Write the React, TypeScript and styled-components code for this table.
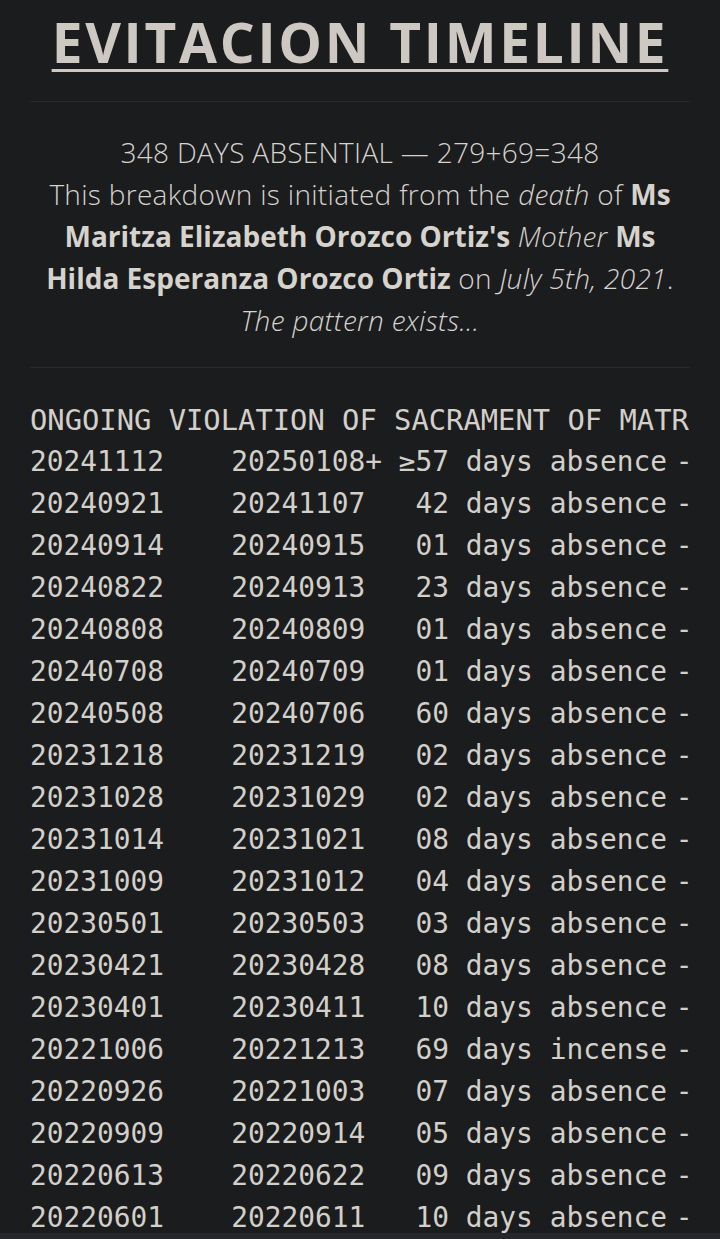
import React from 'react'
import styled, { createGlobalStyle } from 'styled-components'

type Entry = {
  start: string
  end: string
  days: string
  kind?: string
}

const entries: Entry[] = [
  { start: '20241112', end: '20250108+', days: '≥57' },
  { start: '20240921', end: '20241107', days: '42' },
  { start: '20240914', end: '20240915', days: '01' },
  { start: '20240822', end: '20240913', days: '23' },
  { start: '20240808', end: '20240809', days: '01' },
  { start: '20240708', end: '20240709', days: '01' },
  { start: '20240508', end: '20240706', days: '60' },
  { start: '20231218', end: '20231219', days: '02' },
  { start: '20231028', end: '20231029', days: '02' },
  { start: '20231014', end: '20231021', days: '08' },
  { start: '20231009', end: '20231012', days: '04' },
  { start: '20230501', end: '20230503', days: '03' },
  { start: '20230421', end: '20230428', days: '08' },
  { start: '20230401', end: '20230411', days: '10' },
  { start: '20221006', end: '20221213', days: '69', kind: 'incense' },
  { start: '20220926', end: '20221003', days: '07' },
  { start: '20220909', end: '20220914', days: '05' },
  { start: '20220613', end: '20220622', days: '09' },
  { start: '20220601', end: '20220611', days: '10' },
]

const GlobalStyle = createGlobalStyle`
  body {
    margin: 0;
    background: #1b1c1e;
    color: #d6d2cc;
    font-family: "Open Sans", "Noto Sans", sans-serif;
  }
`

const App: React.FC = () => {
  return (
    <>
      <GlobalStyle />
      <Page>
        <Title>EVITACION TIMELINE</Title>
        <Rule />
        <Intro>
          348 DAYS ABSENTIAL — 279+69=348
          <br />
          This breakdown is initiated from the <em>death</em> of <strong>Ms</strong>
          <br />
          <strong>Maritza Elizabeth Orozco Ortiz's</strong> <em>Mother</em> <strong>Ms</strong>
          <br />
          <strong>Hilda Esperanza Orozco Ortiz</strong> on <em>July 5th, 2021</em>.
          <br />
          <em>The pattern exists...</em>
        </Intro>
        <Rule />
        <Timeline>
          <Heading>ONGOING VIOLATION OF SACRAMENT OF MATRIMONY</Heading>
          {entries.map((e) => (
            <Row key={e.start}>
              <Cell>{e.start}</Cell>
              <Cell>{e.end}</Cell>
              <Count>{e.days}</Count>
              <Cell> days {e.kind ?? 'absence'} </Cell>
              <Dash>-</Dash>
            </Row>
          ))}
        </Timeline>
      </Page>
      <BottomBar />
    </>
  )
}

const Page = styled.main`
  padding: 9px 30px 0;
`

const Title = styled.h1`
  margin: 0;
  text-align: center;
  font-family: "Open Sans", sans-serif;
  font-weight: 700;
  font-size: 55px;
  line-height: 66px;
  letter-spacing: 2.7px;
  color: #cdc8c1;
  text-decoration: underline;
  text-decoration-thickness: 3px;
  text-underline-offset: 6px;
`

const Rule = styled.hr`
  margin: 26px 0 29px;
  border: 0;
  border-top: 1px solid #27292b;
`

const Intro = styled.p`
  margin: 0;
  text-align: center;
  font-size: 28px;
  font-weight: 300;
  letter-spacing: 0.3px;
  line-height: 42px;
  color: #d6d2cc;

  strong {
    font-weight: 700;
    letter-spacing: 0;
  }
`

const Timeline = styled.div`
  padding-top: 2px;
  overflow: hidden;
  font-family: "DejaVu Sans Mono", "Liberation Mono", monospace;
  color: #d3cfc9;
  white-space: pre;
`

const Heading = styled.div`
  font-size: 28.8px;
  line-height: 42px;
`

const Row = styled.div`
  display: grid;
  grid-template-columns: 12ch 9ch 4ch max-content max-content;
  font-size: 27.85px;
  line-height: 42px;
`

const Cell = styled.span``

const Count = styled.span`
  text-align: right;
`

const Dash = styled.span`
  margin-left: -8px;
`

const BottomBar = styled.div`
  position: fixed;
  left: 0;
  right: 0;
  bottom: 0;
  height: 6px;
  background: #26272b;
`

export default App
